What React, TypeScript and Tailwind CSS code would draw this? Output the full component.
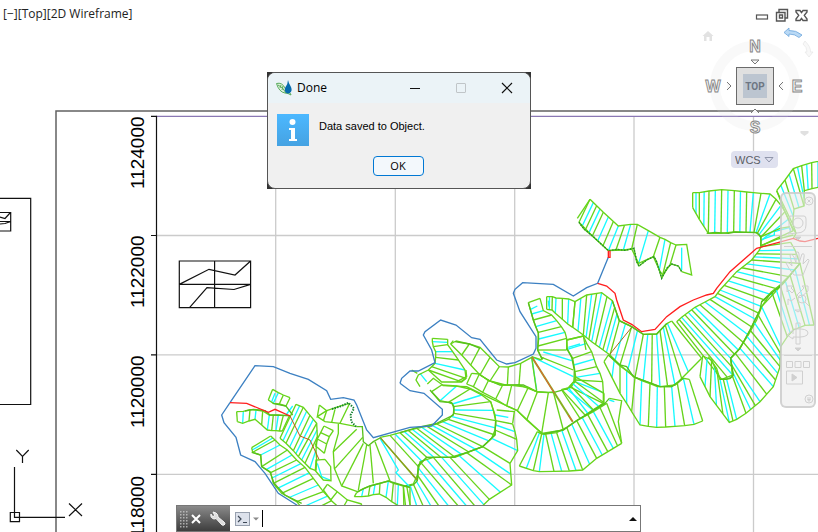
import React from "react";

type Rung = [number, number, number, number, number?];
type Strip = { rungs: Rung[] };
type Sheet = {
  x: number;
  y: number;
  strips: Strip[];
  green?: string[];
  cyan?: string[];
  dark?: string[];
};

const GREEN = "#66d41a";
const CYAN = "#16faff";

/* Each sheet is surveyed at three units to the pixel. A rung joins the two
   edges of a strip; its last number says how many bays follow it. */
const sheets: Sheet[] = [
  {
    x: 560,
    y: 180,
    strips: [
      {
        rungs: [
          [90, 58, 57, 127, 4], [130, 97, 97, 168, 3], [175, 138, 145, 212, 2], [212, 133, 190, 210, 1],
          [232, 133, 215, 207, 0], [265, 152, 236, 250, 1], [300, 172, 280, 230, 1], [315, 178, 298, 270, 1],
          [332, 188, 308, 285, 0], [348, 195, 330, 255, 0],
        ],
      },
      {
        rungs: [
          [398, 38, 398, 83, 2], [418, 38, 418, 118, 2], [447, 33, 445, 160, 2], [485, 29, 483, 160, 2],
          [523, 32, 521, 156, 2], [560, 36, 558, 157, 1], [580, 38, 570, 157, 1], [603, 40, 582, 157, 1],
          [630, 42, 588, 158, 1], [648, 58, 592, 160, 1], [663, 76, 597, 164, 1], [675, 95, 602, 172, 1],
          [685, 118, 603, 182, 1], [700, 152, 603, 197, 0],
        ],
      },
    ],
    green: ["52,115 90,58", "348,195 380,193 395,285 365,275", "603,170 660,145 690,140", "603,197 650,178 700,165"],
    cyan: ["365,203 365,270", "607,178 643,165 643,155 688,143 692,155"],
    dark: [
      "57,127 72,147 100,170 145,212 172,208 195,211 222,205 230,245 237,258 260,240 282,230 290,245 305,295 322,263 335,252 355,258 365,275",
      "440,160 465,157 505,160 525,156 590,158 603,170 602,200",
    ],
  },
  {
    x: 690,
    y: 150,
    strips: [
      {
        rungs: [
          [260, 122, 308, 222, 2], [285, 90, 312, 177, 2], [310, 56, 342, 168, 2],
          [335, 47, 343, 122, 2], [365, 38, 366, 116, 1], [384, 34, 384, 112, 1], [400, 30, 400, 110, 0],
        ],
      },
    ],
    green: ["260,122 285,185 305,228 318,250 310,265", "308,222 315,240 318,250"],
  },
  {
    x: 560,
    y: 290,
    strips: [
      {
        rungs: [
          [603, -130, 692, -143, 1], [597, -118, 705, -120, 3], [575, -90, 720, -80, 3], [530, -55, 670, -20, 4],
          [480, 0, 605, 50, 2], [465, 20, 590, 90, 2], [435, 36, 565, 135, 2], [405, 52, 535, 180, 2],
          [385, 67, 512, 205, 2], [365, 82, 518, 255, 2], [350, 95, 485, 268, 0],
        ],
      },
      {
        rungs: [
          [720, -80, 762, 105, 2], [690, -45, 735, 106, 2], [660, -15, 700, 120, 2], [635, 5, 682, 140, 1],
          [605, 50, 662, 170, 3], [570, 120, 660, 230, 3], [540, 175, 640, 290, 2], [512, 205, 600, 335, 3],
          [518, 260, 558, 370, 1], [500, 268, 530, 388, 2], [480, 268, 508, 397, 3], [455, 210, 450, 320, 2],
          [428, 198, 420, 260, 0],
        ],
      },
      {
        rungs: [
          [45, 35, 38, 112, 2], [80, 15, 70, 135, 3], [125, 8, 95, 155, 2], [157, 32, 118, 172, 3],
          [178, 92, 150, 195, 2], [215, 110, 180, 225, 2], [250, 133, 225, 262, 3], [290, 132, 300, 290, 2],
          [310, 112, 345, 285, 2], [322, 100, 385, 245, 1], [335, 93, 425, 205, 0],
        ],
      },
      {
        rungs: [
          [145, 195, 132, 215, 2], [180, 228, 180, 310, 1], [200, 242, 200, 340, 1], [225, 262, 215, 365, 1],
          [245, 272, 240, 405, 1], [270, 281, 265, 409, 1], [292, 290, 290, 412, 1], [313, 290, 317, 411, 1],
          [335, 290, 345, 409, 1], [352, 280, 374, 407, 1], [370, 265, 402, 403, 1], [388, 268, 428, 393, 0],
        ],
      },
      {
        rungs: [
          [20, 150, 70, 138, 1], [22, 178, 80, 160, 1], [38, 205, 95, 185, 2], [45, 245, 110, 230, 1],
          [47, 262, 120, 250, 1], [47, 270, 128, 275, 1], [45, 275, 130, 308, 1], [32, 292, 130, 340, 1],
          [20, 297, 98, 360, 1], [5, 298, 75, 375, 0],
        ],
      },
    ],
    dark: [
      "720,-80 670,-20 605,35 600,60 570,120 540,175 512,205 520,255 510,266 480,268",
      "157,32 178,92 215,110 250,133 290,132 320,100",
      "145,195 180,225 200,230 220,260 300,290 335,290 370,265",
    ],
    green: ["605,35 635,5", "445,200 470,235 480,268"],
  },
  {
    x: 400,
    y: 270,
    strips: [
      { rungs: [[440, 80, 440, 118, 2], [457, 80, 456, 120, 1], [468, 84, 466, 130, 1], [487, 85, 487, 148, 1], [506, 87, 503, 162, 1], [525, 95, 518, 172, 0]] },
      {
        rungs: [
          [385, 98, 420, 85, 0], [395, 132, 430, 122, 1], [400, 150, 455, 135, 1], [407, 170, 470, 152, 1],
          [415, 187, 484, 170, 1], [416, 207, 495, 187, 1], [414, 228, 500, 205, 1], [413, 240, 500, 240, 0],
        ],
      },
      { rungs: [[97, 205, 143, 208, 1], [97, 215, 143, 217, 1], [100, 230, 143, 224, 1], [107, 245, 158, 245, 1], [107, 262, 175, 270, 1], [105, 280, 195, 300, 1], [95, 290, 198, 325, 1], [85, 300, 183, 335, 0]] },
      {
        rungs: [
          [168, 213, 152, 222, 0], [208, 222, 185, 255, 0], [240, 232, 212, 285, 0], [270, 262, 240, 315, 0],
          [298, 290, 270, 333, 0], [325, 291, 322, 346, 0], [362, 280, 357, 345, 0], [395, 262, 410, 365, 0],
        ],
      },
    ],
    green: [
      "427,268 413,240", "425,262 520,300", "395,260 425,270", "500,210 550,198 558,240", "500,210 500,235",
      "85,300 55,315 48,330 60,350", "85,300 125,336 185,336 198,325", "82,342 100,325 128,345",
      "152,222 160,212", "425,268 430,262",
    ],
    cyan: ["395,260 410,360", "430,246 515,272", "445,92 447,110", "392,118 412,108", "505,232 540,222", "60,310 80,335", "400,262 520,320"],
    dark: ["500,235 515,262 523,300 522,335 505,355 460,368 410,365 370,345 300,345 270,333 240,315", "165,215 208,222 240,235", "385,98 400,150 415,190 413,240 427,268"],
  },
  {
    x: 400,
    y: 370,
    strips: [
      {
        rungs: [
          [215, 10, 200, 42, 0], [238, 12, 220, 50, 0], [265, 32, 248, 67, 0], [308, 45, 287, 87, 0],
          [335, 46, 320, 108, 0], [385, 52, 352, 122, 0], [412, 66, 380, 150, 0], [445, 68, 425, 190, 0],
          [460, 66, 490, 180, 0],
        ],
      },
      { rungs: [[485, 60, 540, 145, 1], [505, 53, 565, 132, 3], [523, 33, 612, 98, 1], [525, 20, 612, 70, 0]] },
      {
        rungs: [
          [412, 185, 358, 288, 2], [425, 192, 400, 302, 1], [432, 192, 418, 305, 1], [437, 192, 462, 304, 2],
          [470, 188, 508, 303, 2], [500, 172, 548, 300, 2], [530, 152, 590, 265, 3], [580, 125, 640, 235, 2],
          [620, 100, 665, 220, 0],
        ],
      },
      {
        rungs: [
          [95, 65, 125, 45, 1], [120, 92, 170, 48, 1], [145, 97, 210, 57, 1], [157, 102, 245, 75, 1],
          [160, 110, 272, 95, 1], [162, 120, 280, 121, 1], [162, 130, 287, 152, 2], [145, 148, 285, 195, 2],
          [110, 162, 248, 230, 4], [50, 175, 165, 262, 4], [0, 188, 80, 262, 2], [-30, 196, 55, 290, 1],
          [-60, 202, 52, 332, 0],
        ],
      },
      {
        rungs: [
          [287, 152, 338, 162, 1], [287, 165, 345, 185, 1], [285, 180, 350, 208, 1], [275, 205, 353, 242, 1],
          [248, 230, 330, 280, 2], [200, 248, 335, 345, 2], [150, 262, 268, 388, 2], [100, 262, 235, 420, 2],
          [60, 275, 185, 420, 2], [52, 315, 125, 420, 2], [40, 342, 75, 420, 3], [10, 350, 12, 420, 0],
        ],
      },
    ],
    green: ["290,120 343,125 338,160", "272,95 285,135 287,152", "628,85 665,92 655,155 665,220", "352,122 415,180 430,192", "35,0 52,10", "170,35 200,20 198,0", "128,47 200,50 272,85 352,122"],
    cyan: ["285,135 325,142", "628,90 643,95"],
    dark: [
      "90,60 120,95 155,98 162,110 160,135 110,160 50,173 0,188",
      "287,152 285,195 248,230 160,262 80,262 55,285 52,332 40,345 10,350",
      "430,192 490,180 530,152 615,100 628,85",
    ],
  },
  {
    x: 210,
    y: 350,
    strips: [
      {
        rungs: [
          [80, 185, 82, 215, 1], [100, 184, 98, 220, 1], [120, 179, 117, 213, 1], [138, 180, 135, 208, 1],
          [158, 183, 155, 225, 1], [178, 195, 172, 240, 1], [190, 195, 185, 242, 1], [205, 195, 198, 242, 1],
          [220, 196, 208, 243, 1], [238, 197, 217, 243, 0],
        ],
      },
      { rungs: [[188, 118, 175, 150, 0], [205, 128, 190, 160, 1], [220, 135, 208, 162, 1], [240, 143, 228, 168, 0]] },
      {
        rungs: [
          [258, 163, 210, 265, 2], [280, 172, 228, 280, 2], [300, 196, 250, 302, 2], [320, 220, 265, 320, 2],
          [322, 260, 285, 340, 1], [318, 300, 300, 355, 1], [320, 330, 318, 362, 0],
        ],
      },
      { rungs: [[342, 228, 370, 242, 0], [332, 248, 358, 260, 0], [322, 267, 350, 282, 0], [316, 287, 343, 310, 0]] },
      {
        rungs: [
          [182, 258, 125, 293, 2], [195, 270, 128, 307, 1], [210, 285, 152, 315, 1], [232, 300, 155, 350, 2],
          [260, 330, 182, 368, 2], [285, 352, 190, 400, 2], [310, 385, 215, 430, 2], [340, 425, 260, 455, 2],
          [365, 452, 290, 490, 0],
        ],
      },
      {
        rungs: [
          [440, 428, 433, 440, 1], [460, 416, 455, 440, 1], [480, 408, 475, 438, 1], [495, 404, 490, 434, 1],
          [510, 400, 508, 432, 1], [535, 393, 528, 442, 1], [550, 400, 545, 455, 1], [565, 404, 562, 465, 1],
          [580, 408, 588, 480, 1], [600, 412, 600, 480, 0],
        ],
      },
      { rungs: [[352, 403, 340, 420, 0], [382, 425, 362, 450, 0], [412, 450, 395, 480, 0], [455, 462, 450, 480, 0]] },
    ],
    green: [
      "328,165 350,182 322,200 328,165", "322,200 345,215 390,220 440,230", "350,182 395,167 418,160",
      "350,182 340,212", "375,178 365,217", "418,162 390,220", "385,222 385,250 370,305 373,355 395,408 442,425",
      "440,238 370,305", "458,262 375,355", "460,280 395,408", "470,285 445,420", "480,285 490,400",
      "495,275 540,393", "345,328 318,330 316,362 340,390 363,392 362,350 345,328",
    ],
    cyan: ["510,265 565,360 558,368 600,412", "322,340 335,380 360,390", "195,130 185,155", "248,168 228,195"],
    dark: ["125,307 152,315 155,350 180,365 192,400 225,435 275,460", "440,230 457,230 460,275 475,287 490,275 510,264", "442,425 480,408 535,393 600,412", "188,160 228,168 248,195", "105,183 130,178 165,182 180,195 240,197"],
  },
];

const mix = (a: number, b: number, t: number) => Math.round((a + (b - a) * t) * 10) / 10;

function StripLines({ rungs }: Strip) {
  const lines: React.ReactNode[] = [];
  let k = 0;
  rungs.forEach((r, i) => {
    const next = rungs[i + 1];
    const count = next ? Math.max(1, r[4] ?? 1) : 1;
    const plain = (r[4] ?? 0) === 0;
    for (let j = 0; j < count; j++) {
      const t = j / count;
      const p = next ? [0, 1, 2, 3].map((n) => mix(r[n] as number, next[n] as number, t)) : r;
      const cyan = k % 2 === 1 && !plain;
      lines.push(
        <line key={k} x1={p[0]} y1={p[1]} x2={p[2]} y2={p[3]} stroke={cyan ? CYAN : GREEN} />
      );
      k++;
    }
  });
  return (
    <g>
      {lines}
      <polyline points={rungs.map((r) => `${r[0]},${r[1]}`).join(" ")} stroke={GREEN} />
      <polyline points={rungs.map((r) => `${r[2]},${r[3]}`).join(" ")} stroke={GREEN} />
    </g>
  );
}

function Paths({ list, color, x, y, width = 4 }: { list: string[]; color: string; x: number; y: number; width?: number }) {
  return (
    <g transform={`translate(${x} ${y}) scale(0.33333)`} stroke={color} strokeWidth={width}>
      {list.map((p) => (
        <polyline key={p} points={p} />
      ))}
    </g>
  );
}

function Drawing() {
  return (
    <svg className="absolute inset-0 h-full w-full" viewBox="0 0 818 532" preserveAspectRatio="xMinYMin slice" fill="none" aria-label="Drawing area">
      <g stroke="#cbcbcb" strokeWidth="1.3">
        {[275.7, 395.3, 514.7, 634, 753.5].map((x) => (
          <path key={x} d={`M${x} 116V532`} />
        ))}
        {[235.5, 354.8, 474.3].map((y) => (
          <path key={y} d={`M156 ${y}H818`} />
        ))}
      </g>
      <path d="M56 532V111H818" stroke="#626262" strokeWidth="1.5" />
      <path d="M156 116.3H818" stroke="#8a78b4" strokeWidth="1.2" />
      <path d="M156.5 116V532M151 116.3H157M151 235.5H157M151 354.8H157M151 474.3H157" stroke="#111" strokeWidth="1.2" />
      <g fill="#000" className="font-['Liberation_Sans',sans-serif] text-[19px]">
        <text transform="translate(144 189) rotate(-90)">1124000</text>
        <text transform="translate(144 308) rotate(-90)">1122000</text>
        <text transform="translate(144 428) rotate(-90)">1120000</text>
        <text transform="translate(144 547) rotate(-90)">1118000</text>
      </g>
      <g stroke="#111" strokeWidth="1.2">
        <path d="M0 198.3H30.7V404.5H0" />
        <path d="M0 212.5H10.7V231H0M0 221.5H10.7M0 217L5 218.5 10 213M0 224L5 223.5 10.7 221.5" />
        <path d="M179.3 261H250.6V307.7H179.3ZM214.6 261V307.7M179.3 284.4H250.6M179.3 284.4L209 269.3 235 275 250.6 261M189.5 307.7L207 287.7 234 289.5 250.6 284.4" />
        <path d="M14.5 467V517.3H65M10.3 512.5H19.5V521.7H10.3Z" />
        <path d="M16.3 450L22.5 456.5 28.7 450M22.5 456.5V463M69 503.5L82 516M82 503.5L69 516" />
      </g>
      {sheets.map((s, i) => (
        <g key={i}>
          <g transform={`translate(${s.x} ${s.y}) scale(0.33333)`} strokeWidth="4">
            {(s.cyan ?? []).map((p) => (
              <polyline key={p} points={p} stroke={CYAN} />
            ))}
            {s.strips.map((strip, j) => (
              <StripLines key={j} rungs={strip.rungs} />
            ))}
          </g>
          <Paths list={s.green ?? []} color={GREEN} x={s.x} y={s.y} />
          <Paths list={s.dark ?? []} color="#57c01c" x={s.x} y={s.y} width={4} />
        </g>
      ))}
      <g transform="translate(560 180) scale(0.33333)" stroke="#13802f" strokeWidth="4" strokeDasharray="3 6">
        <path d="M57 127L72 147 100 170 145 212 172 208 195 211 222 205 230 245 237 258 260 240 282 230 290 245 305 295 322 263 335 252 355 258 365 275" />
      </g>
      <g transform="translate(210 350) scale(0.33333)" stroke="#13802f" strokeWidth="6" strokeDasharray="4 4">
        <path d="M366 177L395 168 415 158 432 175 422 195 424 215 438 230" />
      </g>
      <Paths
        x={400}
        y={270}
        color="#3c80c2"
        list={[
          "0,340 5,325 30,303 55,303 105,278 95,240 70,195 75,185 122,150 168,165 215,203 240,208 290,270 320,282 345,278 400,252 408,235 408,200 360,125 340,70 345,58 368,38 460,43 520,78 560,53 593,40 625,-38",
          "-510,398 -435,287 -380,290 -330,310 -275,328 -220,362 -208,388 -170,383 -138,390 -130,405 -100,480 -80,503 30,472 95,468 127,435 127,418 72,370 30,362 0,340",
          "-510,398 -535,435 -528,458 -492,502 -478,555 -435,575 -405,610 -365,670 -305,708",
        ]}
      />
      <Paths x={210} y={350} color="#ff1e1e" list={["60,158 110,160 175,187 195,178 240,198"]} />
      <Paths x={210} y={350} color="#bd5b18" list={["240,198 270,258 300,270 327,328"]} width={3} />
      <Paths x={210} y={350} color="#8f9a1c" list={["510,262 622,390"]} />
      <Paths
        x={560}
        y={290}
        color="#ff1e1e"
        list={["113,-20 140,-12 165,10 170,30 190,90 215,103 245,125 285,118 320,80 360,50 400,30 440,15 460,10 470,-5 510,-55 590,-125 700,-155 720,-147 735,-145 774,-155", "145,-118 145,-98 150,-98 150,-118"]}
      />
      <Paths x={400} y={270} color="#86b01f" list={["395,260 518,455"]} width={6} />
      <Paths x={400} y={270} color="#f05238" list={["397,262 462,368", "505,435 518,455"]} width={3} />
      <Paths x={560} y={290} color="#a66b18" list={["215,112 150,192"]} width={3} />
    </svg>
  );
}

function WindowControls() {
  return (
    <div className="absolute right-2 top-2 flex gap-1">
      <button aria-label="Minimize drawing" className="h-4 w-4">
        <svg viewBox="0 0 16 16" fill="#fff" stroke="#555" strokeWidth="1.2">
          <rect x="2.5" y="7" width="11" height="4" />
        </svg>
      </button>
      <button aria-label="Restore drawing" className="h-4 w-4">
        <svg viewBox="0 0 16 16" fill="#fff" stroke="#555" strokeWidth="1.4">
          <path d="M5 1.5H13.5V10H11V13H2.5V4.5H5Z" />
          <path d="M5 4.5H11V10M5.5 7H8.5V10H5.5Z" />
        </svg>
      </button>
      <button aria-label="Close drawing" className="h-4 w-4">
        <svg viewBox="0 0 16 16" fill="#fff" stroke="#555" strokeWidth="1.4">
          <path d="M2 2.5H6L7.5 4.5 9 2.5H13V4L10.300 7.300 13 11V12.500H9L7.500 10.500 6 12.500H2V11L4.700 7.300 2 4Z" />
        </svg>
      </button>
    </div>
  );
}

function Letter({ name, label }: { name: string; label: string }) {
  return (
    <button aria-label={label} className="h-4 w-5">
      <svg viewBox="0 0 20 16" className="font-['Liberation_Sans',sans-serif] text-[16px] font-bold">
        <text x="10" y="14" textAnchor="middle" fill="#f4f4f4" stroke="#858585" strokeWidth="0.9">
          {name}
        </text>
      </svg>
    </button>
  );
}

function Arrow({ d }: { d: string }) {
  return (
    <svg className="h-2 w-3" viewBox="0 0 12 8" fill="#f7f7f7" stroke="#777">
      <path d={d} />
    </svg>
  );
}

function ViewCube() {
  return (
    <div className="absolute right-0 top-6 h-36 w-32">
      <svg className="absolute inset-0 h-full w-full" viewBox="0 0 128 144" fill="none">
        <circle cx="65" cy="62" r="40" stroke="#d9d9d9" strokeOpacity="0.16" strokeWidth="10" />
        <path d="M12.5 12L18 7 23.5 12H22V17H19.500V13H16.500V17H14V12Z" fill="#e2e2e2" />
        <path d="M94 8.500L99 4V6.500Q106 6 112 11L109 13.500Q105 10 99 10V12.500Z" fill="#b9d9f5" stroke="#6ba4dc" strokeWidth="0.8" />
        <path d="M115 17Q121 23 120.500 28H123L119 33 115 28H117Q117 23 113 20Z" fill="#f8f8f8" stroke="#e6e6e6" strokeWidth="0.7" />
        <path d="M110.500 107H118.500V109L114.500 112 110.500 109Z" fill="#e0e0e0" />
      </svg>
      <div className="absolute left-3 top-3 grid grid-cols-[34px_38px_34px] grid-rows-[31px_38px_31px] place-items-center">
        <span />
        <div className="flex flex-col items-center gap-1">
          <Letter name="N" label="North view" />
          <Arrow d="M2 2H10L6 6Z" />
        </div>
        <span />
        <div className="flex items-center">
          <Letter name="W" label="West view" />
          <Arrow d="M4 0L8 4 4 8" />
        </div>
        <button className="flex h-[38px] w-[38px] items-center justify-center border border-[#6b6b6b] bg-[#e0e0e0]">
          <span className="flex h-6 w-6 items-center justify-center bg-[#bcc5d0] font-['Roboto',sans-serif] text-[10px] font-bold text-[#6d7682]">TOP</span>
        </button>
        <div className="flex items-center">
          <Arrow d="M8 0L4 4 8 8" />
          <Letter name="E" label="East view" />
        </div>
        <span />
        <div className="flex flex-col items-center gap-1">
          <Arrow d="M2 6L6 2 10 6" />
          <Letter name="S" label="South view" />
        </div>
      </div>
    </div>
  );
}

function CoordinateSystem() {
  return (
    <div className="absolute right-10 top-[151px] flex h-[17px] w-[47px] items-center rounded bg-[#dfe1ef]">
      <select aria-label="Coordinate system" className="w-full appearance-none bg-transparent pl-1 font-['Liberation_Sans',sans-serif] text-[11px] leading-4 text-[#5b5e66] outline-none">
        <option>WCS</option>
      </select>
      <svg className="pointer-events-none absolute right-1 h-2 w-2.5" viewBox="0 0 10 8" fill="none" stroke="#9096ab">
        <path d="M1 1.500H9L5 6Z" />
      </svg>
    </div>
  );
}

function NavigationBar() {
  const tool = "flex w-full items-center justify-center";
  return (
    <nav aria-label="Navigation bar" className="absolute right-0.5 top-48 flex h-54 w-9 flex-col items-center rounded-md border-2 border-[#c4c4c4]/70 bg-[#ebebeb]/60 text-[#d0d0d0]">
      <button aria-label="Close bar" className="mt-0.5 self-end">
        <svg className="h-2.5 w-2.5" viewBox="0 0 10 10" fill="none" stroke="currentColor">
          <circle cx="5" cy="5" r="4" />
          <path d="M3.500 3.500L6.500 6.500M6.500 3.500L3.500 6.500" />
        </svg>
      </button>
      <button aria-label="Steering wheel" className={`${tool} h-9`}>
        <svg className="h-8 w-7" viewBox="0 0 28 32" fill="none" stroke="currentColor">
          <path d="M6 8H20Q22 8 22 11V17Q22 25 13 25L4 26 7 22Q4 18 5 14Z" />
          <circle cx="14" cy="15" r="5" />
          <path d="M11 29H17L14 32Z" fill="currentColor" />
        </svg>
      </button>
      <hr className="mt-1 w-7 border-[#d2d2d2]" />
      <button aria-label="Pan" className={`${tool} h-8`}>
        <svg className="h-7 w-7" viewBox="0 0 28 28" fill="none" stroke="currentColor">
          <path d="M10 26Q4 19 2 14 4 12 8 17L6 6Q8 4 10 8L12 14 12 3Q15 2 15 5V14L18 5Q21 4 20 8L19 15 24 10Q26 11 24 14L19 26Z" />
        </svg>
      </button>
      <button aria-label="Zoom extents" className={`${tool} h-9`}>
        <svg className="h-8 w-7" viewBox="0 0 28 32" fill="none" stroke="currentColor">
          <path d="M3 5V11L5 9 8 12 10 10 7 7 9 5ZM24 5V10L16 17 13 14 20 7 18 5ZM4 24V18L7 20 11 17" />
          <circle cx="18" cy="18" r="4" />
          <path d="M21 21L25 25M11 29H17L14 31Z" />
        </svg>
      </button>
      <button aria-label="Orbit" className={`${tool} mt-1 h-9`}>
        <svg className="h-8 w-7" viewBox="0 0 28 32" fill="none" stroke="currentColor">
          <path d="M12 2H16V23H12ZM9 13V9L3 14 9 18V16Q24 17 24 12 24 7 10 8" />
          <path d="M11 27H17L14 30Z" fill="currentColor" />
        </svg>
      </button>
      <hr className="w-7 border-[#d2d2d2]" />
      <button aria-label="ShowMotion" className={`${tool} h-8`}>
        <svg className="h-7 w-7" viewBox="0 0 28 28" fill="none" stroke="currentColor">
          <path d="M2.500 3.500H8.500V9.500H2.500ZM11 3.500H17V9.500H11ZM19.500 3.500H25.500V9.500H19.500ZM2.500 13H18.500V26H2.500Z" />
          <path d="M8 16L13 19.500 8 23Z" fill="currentColor" />
        </svg>
      </button>
      <button aria-label="Bar options" className="mb-0.5 mt-auto self-end">
        <svg className="h-2.5 w-2.5" viewBox="0 0 10 10" fill="none" stroke="currentColor">
          <circle cx="5" cy="5" r="4" />
          <path d="M3 4H7M3.500 5.500H6.500L5 7.500Z" />
        </svg>
      </button>
    </nav>
  );
}

function DoneDialog() {
  return (
    <div className="absolute left-[267px] top-[72px] w-[264px] bg-[#333]">
      <section role="dialog" aria-labelledby="dialog-title" className="overflow-hidden rounded-lg border border-[#555] bg-[#f0f0f0]">
        <header className="flex h-[30px] items-center bg-[#ebf3f7] pl-2">
          <svg className="h-4 w-4" viewBox="0 0 16 16">
            <path d="M.5 3.500Q6 2 9 8 11 12 14.500 13.500L15 15Q12 13 9 13 3 12 .5 3.500Z" fill="#e3f2df" stroke="#57aa5b" />
            <path d="M2 5Q7 7 10 13M4 8L5 5M6 10L7 6" fill="none" stroke="#57aa5b" />
            <path d="M12 0Q12.500 3 15 7 17 12 12.500 13.500 8 13 9 8 12 4 12 0Z" fill="#066bae" />
          </svg>
          <h1 id="dialog-title" className="ml-1 flex-1 pl-px text-xs text-black">Done</h1>
          <button aria-label="Minimize" className="flex w-[46px] justify-center">
            <svg className="h-3 w-3" viewBox="0 0 12 12" stroke="#111"><path d="M1 6.500H11" /></svg>
          </button>
          <button aria-label="Maximize" disabled className="flex w-[46px] justify-center">
            <svg className="h-3 w-3" viewBox="0 0 12 12" fill="none" stroke="#c0c5c8"><rect x="1.500" y="1.500" width="9" height="9" rx="0.500" /></svg>
          </button>
          <button aria-label="Close" className="flex w-[46px] justify-center">
            <svg className="h-3 w-3" viewBox="0 0 12 12" stroke="#111" strokeWidth="1.200"><path d="M1 1L11 11M11 1L1 11" /></svg>
          </button>
        </header>
        <div className="flex flex-col items-center pb-3">
          <div className="flex w-full gap-2.5 pl-[9px] pt-[11px]">
            <svg className="h-8 w-8" viewBox="0 0 32 32">
              <defs>
                <linearGradient id="info" x2="0" y2="1"><stop stopColor="#4cb8ff" /><stop offset="1" stopColor="#45a2e2" /></linearGradient>
              </defs>
              <path d="M0 0H32V32H0Z" fill="url(#info)" />
              <circle cx="15.500" cy="8" r="3" fill="#fff" />
              <path d="M12 14H18V25H20V27H12V25H14V16H12Z" fill="#fff" />
            </svg>
            <p className="pt-1 font-['Liberation_Sans',sans-serif] text-[11px] leading-4 text-black">Data saved to Object.</p>
          </div>
          <button className="mr-0.5 mt-2.5 h-5 w-[51px] rounded border border-[#0078d4] bg-[#f3f8fc] text-[11px] leading-4 text-black">OK</button>
        </div>
      </section>
    </div>
  );
}

function CommandBar() {
  return (
    <form className="absolute bottom-0 left-44 flex h-[27px] w-[465px] border border-[#777] bg-white">
      <div className="flex w-[53px] items-center bg-linear-to-b from-[#8b8b8b] to-[#3e3e3e]">
        <svg className="h-5 w-3" viewBox="0 0 12 20" fill="#ccc">
          {[2, 5, 8, 11, 14, 17].map((y) => (
            <path key={y} d={`M3 ${y}H4.500V${y + 1.5}H3ZM6 ${y}H7.500V${y + 1.5}H6ZM9 ${y}H10.500V${y + 1.5}H9Z`} opacity="0.75" />
          ))}
        </svg>
        <button type="button" aria-label="Close command line" className="ml-px">
          <svg className="h-3 w-3" viewBox="0 0 12 12" stroke="#fff" strokeWidth="2"><path d="M2 2L10 10M10 2L2 10" /></svg>
        </button>
        <button type="button" aria-label="Customize" className="ml-2">
          <svg className="h-4 w-4" viewBox="0 0 16 16" fill="none" stroke="#f5f5f5">
            <path d="M6 2L3 1 4.500 4 4 5.500 2 5 1 3Q0 7 4 8L6 7.500 12 14Q14 15 15 13 15 12 14 11L8 6Q8 3 6 2Z" fill="#ddd" />
          </svg>
        </button>
      </div>
      <label htmlFor="command" className="flex items-center gap-0.5 pl-[5px] pr-0.5">
        <svg className="h-3.5 w-4" viewBox="0 0 16 14" fill="#dde2ec" stroke="#97a0ae">
          <rect x="0.500" y="0.500" width="14" height="13" />
          <path d="M3 4L6 7 3 10M8 10.500H12" fill="none" stroke="#3d4856" strokeWidth="1.200" />
        </svg>
        <svg className="h-2 w-1.5" viewBox="0 0 6 8" fill="#8a8a8a"><path d="M0 2.500H6L3 5.500Z" /></svg>
      </label>
      <span className="my-1 w-0.5 self-stretch border-r border-black" />
      <input id="command" aria-label="Command" className="min-w-0 flex-1 bg-transparent outline-none" />
      <button type="button" aria-label="Command history" className="pr-[3px]">
        <svg className="h-2 w-2" viewBox="0 0 8 8" fill="#111"><path d="M0 6H8L4 2Z" /></svg>
      </button>
    </form>
  );
}

export default function App() {
  return (
    <main className="relative h-screen w-full overflow-hidden bg-white font-['Open_Sans','Noto_Sans',sans-serif]">
      <Drawing />
      <div className="relative px-[3px] pt-1.5 text-xs leading-4 text-[#222]">[−][Top][2D Wireframe]</div>
      <ViewCube />
      <WindowControls />
      <CoordinateSystem />
      <NavigationBar />
      <DoneDialog />
      <CommandBar />
    </main>
  );
}
